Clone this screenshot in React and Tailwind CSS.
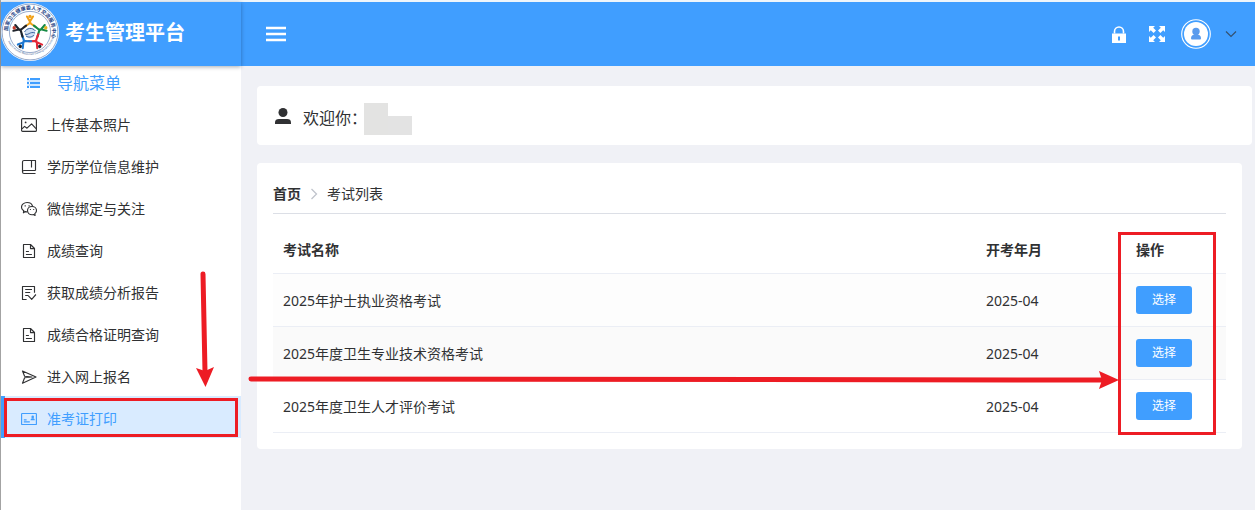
import React from "react";

function Icon({ children, className = "h-4 w-4" }) {
  return (
    <svg viewBox="0 0 16 16" className={className} fill="none" stroke="currentColor" strokeWidth="1.15" strokeLinejoin="round" aria-hidden="true">
      {children}
    </svg>
  );
}

const PictureIcon = () => (
  <Icon>
    <rect x="0.6" y="1.6" width="14.8" height="12.8" rx="1" />
    <circle cx="4.6" cy="5.4" r="0.9" fill="currentColor" stroke="none" />
    <path d="M1 11.8 3.6 9.400l2.400 1.800L10.600 6.800 15 11.600" />
  </Icon>
);

const NotebookIcon = () => (
  <Icon>
    <path d="M14.500 11.500V1.500H3C2.200 1.500 1.500 2.100 1.500 2.900v9.800c0 1 .6 1.800 1.500 1.800h11.500M1.500 12.900c0-.8.6-1.400 1.400-1.400h11.600M10.500 1.800v6.600" />
  </Icon>
);

const WechatIcon = () => (
  <Icon>
    <path d="M6.300 10.900c-.6 0-1.300-.1-1.900-.3L2.400 11.800l.4-2C1.400 8.900.5 7.600.5 6.200c0-2.600 2.500-4.700 5.600-4.700 2.800 0 5 1.600 5.500 3.900" />
    <path d="M11 5.500c2.500 0 4.500 1.800 4.500 4 0 1.300-.7 2.400-1.700 3.100l.3 1.800-1.700-.9c-.4.1-.9.200-1.400.200-2.500 0-4.500-1.900-4.500-4.200s2-4 4.500-4z" />
    <path d="M3.600 4.800h1.200M7.500 4.800h1.200M8.900 8.500h1M12.200 8.500h1" strokeWidth="1.200" />
  </Icon>
);

const DocumentIcon = () => (
  <Icon>
    <path d="M2.500 1.500h7l4 4v9h-11zM9.500 1.600v4h4M4.900 8.500h3M4.900 11.500h6" />
  </Icon>
);

const ReportIcon = () => (
  <Icon>
    <path d="M5.600 14.500H1.500v-13h12v6.300M4.200 4.500h6.800M4.200 7.500h5M4.200 10.500h3M7.200 10.600l3.500 3.700 4.200-4.800" />
  </Icon>
);

const SendIcon = () => (
  <Icon>
    <path d="M1.500 2 15 8 1.500 14.200 3.600 8.800 11 8 3.600 7.200z" />
  </Icon>
);

const CardIcon = () => (
  <Icon>
    <rect x="0.600" y="2.500" width="14.800" height="11" rx="0.600" />
    <path d="M2.800 8.900h2.800M2.800 10.900h6" />
    <circle cx="11.700" cy="5.900" r="1.300" fill="currentColor" stroke="none" />
    <path d="M9.600 9.200c0-1.400.9-2 2.100-2s2.100.6 2.100 2z" fill="currentColor" stroke="none" />
  </Icon>
);

const nav = [
  { label: "上传基本照片", icon: <PictureIcon /> },
  { label: "学历学位信息维护", icon: <NotebookIcon /> },
  { label: "微信绑定与关注", icon: <WechatIcon /> },
  { label: "成绩查询", icon: <DocumentIcon /> },
  { label: "获取成绩分析报告", icon: <ReportIcon /> },
  { label: "成绩合格证明查询", icon: <DocumentIcon /> },
  { label: "进入网上报名", icon: <SendIcon /> },
  { label: "准考证打印", icon: <CardIcon />, active: true },
];

const exams = [
  { name: "2025年护士执业资格考试", date: "2025-04", bg: "bg-[#fdfdfd]" },
  { name: "2025年度卫生专业技术资格考试", date: "2025-04", bg: "bg-[#fafafa]" },
  { name: "2025年度卫生人才评价考试", date: "2025-04", bg: "bg-white" },
];

const figures = [
  { angle: 0, color: "#f0a018", head: "#f0a018" },
  { angle: 72, color: "#168a45", head: "#e2b21c" },
  { angle: 144, color: "#e32636", head: "#20242c" },
  { angle: 216, color: "#1f78d1", head: "#20242c" },
  { angle: 288, color: "#20242c", head: "#c23a2a" },
];

function Logo() {
  return (
    <svg viewBox="0 0 58 58" className="h-[58px] w-[58px] shrink-0" role="img" aria-label="国家卫生健康委人才交流服务中心">
      <defs>
        <path id="arc-top" d="M8 36A22.200 22.200 0 1 1 50 36" />
        <path id="arc-bottom" d="M4.500 31A24.800 24.800 0 0 0 53.500 31" />
      </defs>
      <circle cx="29" cy="29" r="29" fill="#fff" />
      <circle cx="29" cy="29" r="27.900" fill="none" stroke="#5372a8" strokeWidth="0.600" />
      <circle cx="29" cy="29" r="20.600" fill="none" stroke="#5372a8" strokeWidth="0.600" />
      <text fontSize="5" fontWeight="700" fill="#1d3f86">
        <textPath href="#arc-top" startOffset="8">国家卫生健康委人才交流服务中心</textPath>
      </text>
      <text fontSize="2.600" fill="#34558f">
        <textPath href="#arc-bottom" startOffset="8">Health Human Resources Development Center, NHC</textPath>
      </text>
      {figures.map((f) => (
        <g key={f.angle} transform={`rotate(${f.angle} 29 30)`}>
          <path d="M26 13.500 28.900 18.500 32 13.500M23.200 24 28.400 20.500 29 18.500 29.600 20.500 34.800 24" fill="none" stroke={f.color} strokeWidth="2.100" strokeLinecap="round" strokeLinejoin="round" />
          <circle cx="29" cy="13.400" r="1.700" fill={f.head} />
        </g>
      ))}
      <circle cx="29" cy="30" r="5.400" fill="#cfdff3" />
      <path d="M23.500 29c2-4 8-5 11-1M24 31c3 2 5-3 10-1M25 33c3 2 6 1 8-1" fill="none" stroke="#35609f" strokeWidth="1" />
    </svg>
  );
}

export default function App() {
  return (
    <div className="relative flex min-h-screen flex-col border-l border-[#a3a3a3] bg-[#f0f1f6] font-['Noto_Sans','Noto_Sans_CJK_SC',sans-serif] text-sm text-[#303133]">
      <div className="h-0.5 bg-[#eef5fb]" />
      <div className="flex flex-1">
        <aside className="flex w-60 shrink-0 flex-col bg-white">
          <div className="relative flex h-16 items-center gap-1.5 bg-[#409eff] pb-1 shadow-[0_1px_4px_rgba(0,21,41,0.35)]">
            <Logo />
            <h1 className="pt-0.5 text-xl leading-8 font-bold text-white">考生管理平台</h1>
          </div>
          <h2 className="mb-0.5 flex h-[34px] items-center gap-4 pl-6 text-base text-[#409eff]">
            <svg viewBox="0 0 16 16" className="h-4 w-4" fill="currentColor" aria-hidden="true">
              <path d="M2 3h2v2H2zM5 3h10v2H5zM2 7h2v2H2zM5 7h10v2H5zM2 11h2v2H2zM5 11h10v2H5z" />
              <path d="M2 5h13v2H2zM2 9h13v2H2z" opacity="0.25" />
            </svg>
            导航菜单
          </h2>
          <nav aria-label="导航菜单">
            <ul>
              {nav.map((item) => (
                <li key={item.label} className="relative">
                  <a
                    href="#"
                    aria-current={item.active ? "page" : undefined}
                    className={
                      item.active
                        ? "flex h-[42px] items-center gap-2.5 border-l-4 border-[#409eff] bg-[#d9ebff] pt-1 pl-4 text-[#409eff]"
                        : "flex h-[42px] items-center gap-2.5 pt-1 pl-5"
                    }
                  >
                    {item.icon}
                    {item.label}
                  </a>
                  {item.active && <div className="pointer-events-none absolute top-0.5 right-[3px] bottom-px left-[3px] border-3 border-[#ed1c24]" />}
                </li>
              ))}
            </ul>
          </nav>
        </aside>

        <div className="flex min-w-0 flex-1 flex-col">
          <header className="flex h-16 items-center justify-between bg-[#409eff] pr-[18px] pl-[25px] text-white">
            <button aria-label="折叠菜单">
              <svg viewBox="0 0 20 16" className="h-4 w-5" stroke="currentColor" strokeWidth="2.400" aria-hidden="true">
                <path d="M0 2h20M0 8h20M0 14h20" />
              </svg>
            </button>
            <div className="flex items-center">
              <button aria-label="锁屏" className="mr-5">
                <svg viewBox="0 0 18 18" className="h-[18px] w-[18px]" aria-hidden="true">
                  <path d="M4.500 8.500V6.500a4.500 4.500 0 0 1 9 0V8.500" fill="none" stroke="currentColor" strokeWidth="1.600" />
                  <path d="M2 8.500h14V18H2zM8 11.500v4h2v-4z" fill="currentColor" fillRule="evenodd" />
                </svg>
              </button>
              <button aria-label="全屏" className="mr-[15px]">
                <svg viewBox="0 0 18 18" className="h-[18px] w-[18px]" aria-hidden="true">
                  <path d="M1 1h6L5.200 2.800 8 5.600 5.600 8 2.800 5.200 1 7zM17 1h-6l1.800 1.800L10 5.600 12.400 8l2.800-2.800L17 7zM1 17h6l-1.800-1.800L8 12.400 5.600 10l-2.800 2.800L1 11zM17 17h-6l1.800-1.800-2.800-2.800 2.400-2.400 2.800 2.800L17 11z" fill="currentColor" />
                </svg>
              </button>
              <button aria-label="用户" className="flex items-center gap-3.5">
                <svg viewBox="0 0 30 30" className="h-[30px] w-[30px]" aria-hidden="true">
                  <circle cx="15" cy="15" r="14.300" fill="none" stroke="#fff" strokeWidth="1.100" />
                  <circle cx="15" cy="15" r="12" fill="#fff" />
                  <circle cx="15" cy="12.500" r="3.700" fill="#5a9bed" />
                  <path d="M10 19c0-2.500 2-3.600 5-3.600s5 1.100 5 3.600c0 1-.5 1.500-1.500 1.500h-7c-1 0-1.500-.5-1.500-1.500z" fill="#5a9bed" />
                </svg>
                <svg viewBox="0 0 12 12" className="h-3 w-3" fill="none" stroke="#34516f" strokeWidth="1.200" aria-hidden="true">
                  <path d="M1 3.500 6 8.500 11 3.500" />
                </svg>
              </button>
            </div>
          </header>

          <main className="flex flex-col gap-[18px] pt-5 pr-[3px] pb-5 pl-4">
            <section className="flex h-[59px] items-center rounded bg-white pl-[18px] text-base">
              <svg viewBox="0 0 16 16" className="mr-3 h-4 w-4" fill="#303133" aria-hidden="true">
                <circle cx="8" cy="4.500" r="4.500" />
                <path d="M0 16v-1.500C0 12 1.500 11 4 11h8c2.500 0 4 1 4 3.500V16z" />
              </svg>
              <span className="pt-1">欢迎你：</span>
              <span className="-ml-[3px] flex items-end pt-1.5">
                <span className="h-8 w-6 bg-[#e3e3e2]" />
                <span className="h-[19px] w-6 bg-[#e3e3e3]" />
              </span>
            </section>

            <section className="mr-2.5 rounded bg-white p-4">
              <nav aria-label="面包屑" className="flex h-[35px] items-center gap-2 border-b border-[#dcdfe6] pb-1">
                <a href="#" className="font-bold">首页</a>
                <svg viewBox="0 0 10 12" className="h-3 w-2.5" fill="none" stroke="#c0c4cc" strokeWidth="1.300" aria-hidden="true">
                  <path d="M2.500 1 7.500 6 2.500 11" />
                </svg>
                <span>考试列表</span>
              </nav>
              <div className="relative mt-3">
                <table className="w-full table-fixed border-separate border-spacing-0 text-left">
                  <thead>
                    <tr className="h-12">
                      <th className="border-b border-[#ebeef5] px-2.5 font-bold">考试名称</th>
                      <th className="w-[150px] border-b border-[#ebeef5] px-2.5 font-bold">开考年月</th>
                      <th className="w-[100px] border-b border-[#ebeef5] px-2.5 font-bold">操作</th>
                    </tr>
                  </thead>
                  <tbody>
                    {exams.map((e) => (
                      <tr key={e.name} className={`h-[53px] ${e.bg}`}>
                        <td className="border-b border-[#ebeef5] px-2.5 pt-0.5">{e.name}</td>
                        <td className="border-b border-[#ebeef5] px-2.5 pt-0.5">{e.date}</td>
                        <td className="border-b border-[#ebeef5] px-2.5">
                          <button className="block h-7 w-14 rounded-[3px] bg-[#409eff] text-xs text-white">选择</button>
                        </td>
                      </tr>
                    ))}
                  </tbody>
                </table>
                <div className="pointer-events-none absolute top-1.5 right-2.5 -bottom-0.5 w-[98px] border-3 border-[#ed1c24]" />
                <svg viewBox="0 0 870 18" preserveAspectRatio="none" className="pointer-events-none absolute top-[145px] right-[107px] -left-[25px] h-[18px] w-[calc(100%-82px)]" aria-hidden="true">
                  <path d="M3 8 855 9" stroke="#ed1c24" strokeWidth="5" strokeLinecap="round" />
                  <path d="M850 0 870 9 850 18 853 9z" fill="#ed1c24" />
                </svg>
              </div>
            </section>
          </main>
        </div>
      </div>
      <svg viewBox="0 0 18 118" className="pointer-events-none absolute top-[270px] left-[195px] h-[118px] w-[18px]" aria-hidden="true">
        <path d="M7 4 9 102" stroke="#ed1c24" strokeWidth="5" strokeLinecap="round" />
        <path d="M0 98 9 101 18 97 9.500 117z" fill="#ed1c24" />
      </svg>
    </div>
  );
}
